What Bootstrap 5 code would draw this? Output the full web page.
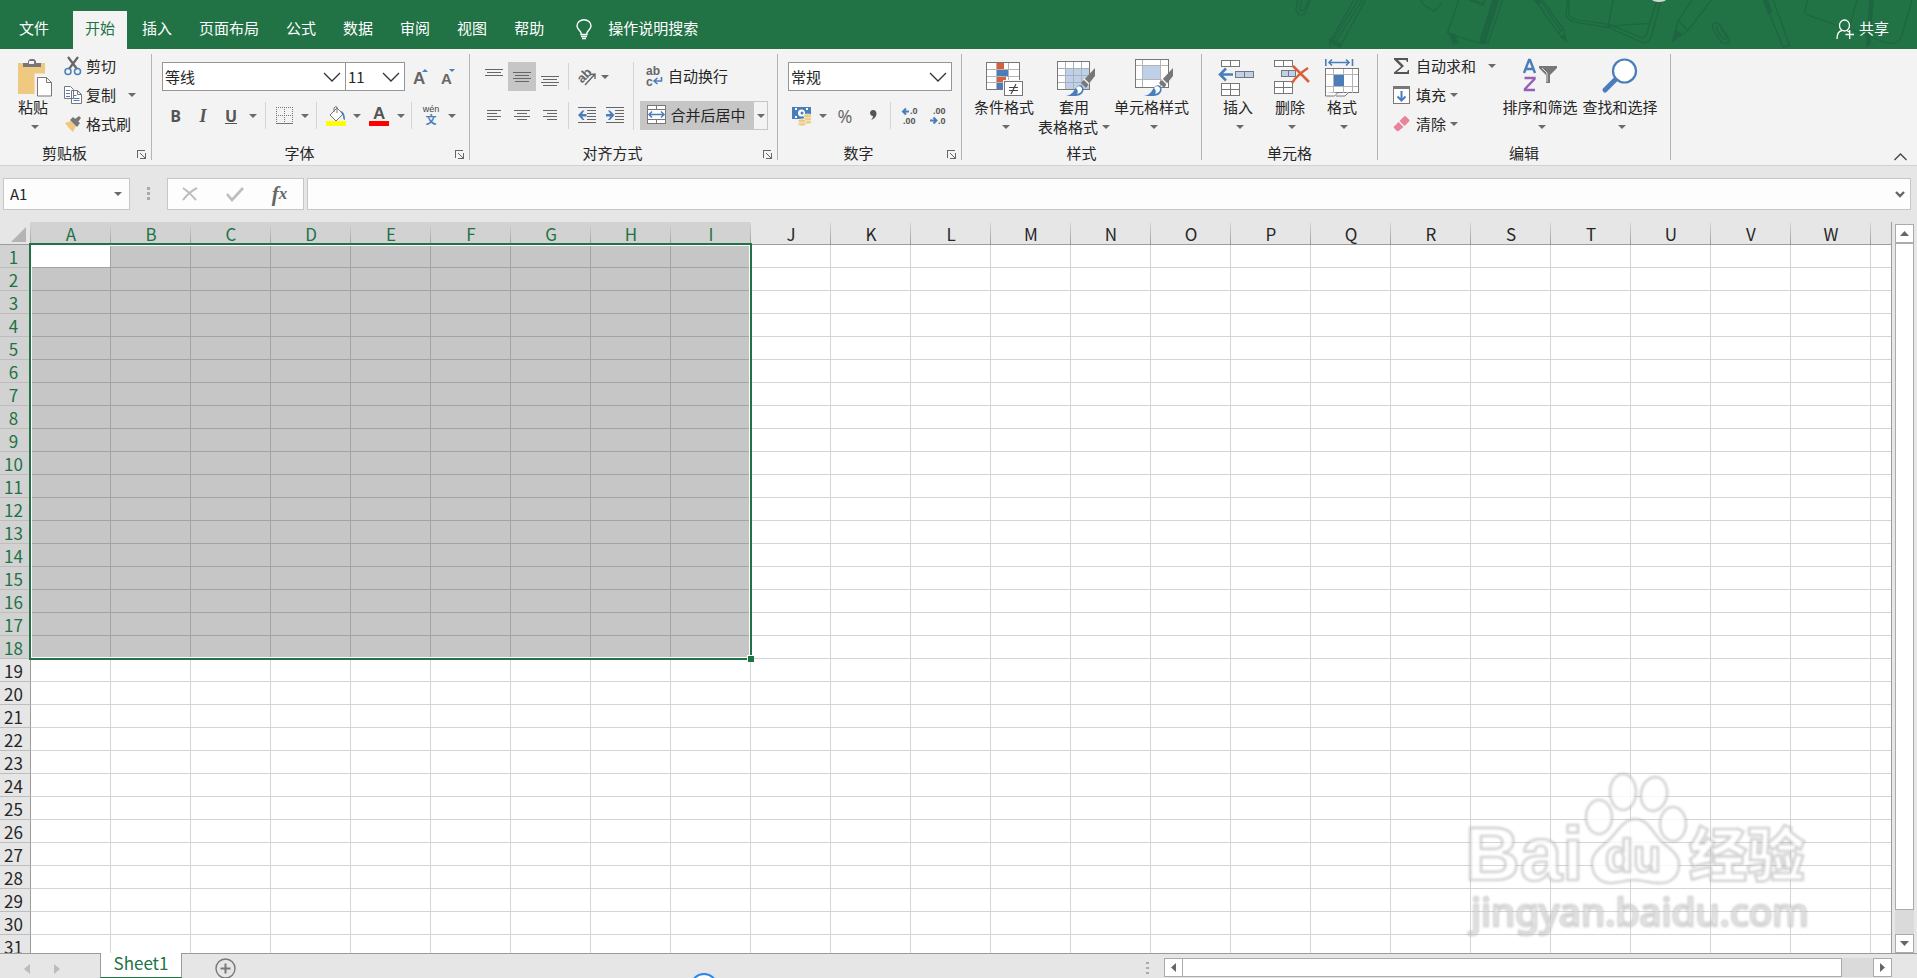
<!DOCTYPE html>
<html lang="zh-CN">
<head>
<meta charset="utf-8">
<meta name="viewport" content="width=device-width, initial-scale=1">
<title>工作簿</title>
<link rel="stylesheet" href="https://cdn.jsdelivr.net/npm/bootstrap@5.3.0/dist/css/bootstrap.min.css">
<style>
:root{--green:#217346;--line:#c6c6c6;--edge:#9b9b9b;--chrome:#e6e6e6;--ribbon:#f3f3f3}
body{font-family:"Noto Sans CJK SC",sans-serif;font-size:15px;line-height:20px;color:#262626;background:var(--chrome)}
button,select,input{font:inherit;color:inherit}
svg{display:block;flex:none;overflow:visible}
.crisp{shape-rendering:crispEdges}
/* title strip */
.tabstrip{background:var(--green);height:49px;color:#fff;padding-top:11px}
.tabstrip .art{position:absolute;right:0;top:0;overflow:hidden}
.rtab{border:0;background:none;color:#fff;padding:0 12px 4px;height:38px;line-height:34px}
.rtab.first{padding-left:19px;padding-right:21px}
.rtab.active{background:var(--ribbon);color:var(--green)}
/* ribbon */
.ribbon{background:var(--ribbon);border-bottom:1px solid #d2d2d2;height:117px;padding:5px 0}
.grp{border-right:1px solid #b5b5b5;height:106px;flex:none}
.grp-body{height:89px}
.grp-name{height:17px;line-height:19px;text-align:center}
.launch{width:22px;padding:0 5px 0 0;border:0;background:none;display:flex;justify-content:flex-end;align-items:flex-end;height:17px}
.launch svg{margin-bottom:1px}
.rb{border:0;background:none;padding:0;height:29px;display:flex;align-items:center;justify-content:center;flex:none;white-space:nowrap}
.rb.on{background:#c6c6c6}
.rb.cap{padding-bottom:2px}
.row26{height:26px;justify-content:flex-start;gap:4px;padding-bottom:2px}
.big{border:0;background:none;padding:0;display:flex;flex-direction:column;align-items:center;flex:none;white-space:nowrap}
.big .pic{height:43px;display:flex;align-items:flex-end}
.big .lbl{height:20px;line-height:20px}
.big .sub{height:20px;line-height:20px;display:flex;align-items:center;gap:3px}
.big .sub .caret{margin-left:4px}
.vr1{width:1px;height:27px;background:#d4d4d4;margin:0 4px;flex:none}
.caret{width:8px;height:4px;border:4px solid transparent;border-top-color:#6a6a6a;border-bottom:0;flex:none}
.w12{width:12px}.w14{width:14px}.w16{width:16px}.w26{width:26px}.w27{width:27px}.w28{width:28px}.w30{width:30px}.w32{width:32px}
.pick{appearance:none;border:1px solid #969696;border-radius:0;height:29px;padding:0 0 0 2px;line-height:24px;background:#fff url("data:image/svg+xml,%3Csvg xmlns='http://www.w3.org/2000/svg' width='18' height='10'%3E%3Cpath d='M1 1l8 8 8-8' fill='none' stroke='%23333' stroke-width='1.3'/%3E%3C/svg%3E") no-repeat right 4px center}
.pct{font:400 18px/18px "Open Sans",sans-serif;color:#666}
.gl{font:700 16px/20px "Open Sans",sans-serif;color:#555}
/* formula bar */
.fbar{padding:12px 6px 12px 3px;height:56px}
.fbox{background:#fdfdfd;border:1px solid var(--line);height:32px}
.fbox input{border:0;background:none;outline:0;min-width:0}
/* sheet */
.gridwrap{background:#fff;border-right:1px solid var(--edge);overflow:hidden;min-width:0;position:relative}
.cells{border-collapse:separate;border-spacing:0;table-layout:fixed;width:1951px;font-size:17px}
.cells th,.cells td{padding:0;height:23px;font-weight:400;text-align:center;line-height:20px;overflow:hidden;color:#262626}
.cells td{border-right:1px solid #d4d4d4;border-bottom:1px solid #d4d4d4;width:80px}
.cells thead th{background:var(--chrome);border-bottom:1px solid var(--edge);border-right:1px solid;border-image:linear-gradient(#dcdcdc,#9b9b9b) 1;padding-top:2px;padding-left:1px}
.cells tbody th{background:var(--chrome);border-right:1px solid var(--edge);border-bottom:1px solid #bdbdbd;padding-top:2px;width:31px;padding-right:3px}
.cells thead th.sel,.cells tbody th.sel{background:#d2d2d2;color:var(--green)}
.cells td.sel{background:#c6c6c6;border-color:#a3a3a3}
.cells td.cur{background:#fff}
.range{position:absolute;left:29px;top:21px;width:723px;height:417px;border:2px solid var(--green);box-shadow:inset 0 0 0 1px #fff;pointer-events:none}
.range i{position:absolute;right:-4px;bottom:-4px;width:7px;height:7px;background:var(--green);border:1px solid #fff;border-right:0;border-bottom:0}
.wm{position:absolute;right:76px;bottom:12px;pointer-events:none}
.vbar{width:25px;padding:2px 3px 0 3px}
.sbtn{width:19px;height:19px;border:1px solid #ababab;background:#fff;padding:0;display:flex;align-items:center;justify-content:center;flex:none}
.thumb{background:#fff;border:1px solid #ababab}
.track{background:#dadada}
.foot{height:25px;border-top:1px solid var(--edge)}
.stab{background:#fff;border:1px solid var(--edge);border-top:0;border-bottom:1px solid var(--green);color:var(--green);font-size:17px;line-height:20px;height:25px;margin-top:-1px;width:82px;padding:0 0 4px}
.hbar{width:38%;height:19px;margin-right:25px}
.bubble{position:absolute;left:50%;bottom:0;margin-left:-268px}
</style>
</head>
<body>
<div class="vh-100 d-flex flex-column overflow-hidden position-relative">

<header class="tabstrip d-flex position-relative flex-shrink-0">
  <svg class="art" width="637" height="49" viewBox="0 0 1568 147" preserveAspectRatio="none" fill="none" stroke="#1e6641" stroke-width="3.500" aria-hidden="true">
    <path d="M44 0l-5 28q6 24 22 14l14-42M54 0l-5 28q6 8 12 0l8-28M182 0l-60 128 2 14M210 0l-62 140-24-18M192 0l-62 122M202 0l-64 124M348 0q0 14 16 22l14 12 20-24M440 0l-28 98 20 10 68 24 12-4L548 0M466 0l34 16 4-16M474 0l28 10"/>
    <path d="M524 0l-32 124 12 6L538 0zM416 100l12 32 2-8 8 6-8-26zM122 118l28 14-2 10-20-12z" fill="#1e6641"/>
    <path d="M628 0l56 98 20 24-6-34L646 0M684 98l14-10M640 0l52 92M708 0l-4 46q6 18 28 22l76 14 86 46q16-2 20-18L938 0M712 0l-2 40q4 18 26 20l76 14 80 40q8-2 12-18L928 0M820 0l-12 78 104-8M1014 0l-34 62-12 60 36-30L1062 0M980 62l24 30M1066 72q-6 12 20 54 18 10 22-6l-24-44q-14-14-18-4M1076 78q-4 14 16 38 10 4 6-10l-14-22M1192 0l46 142 16-6L1214 0M1298 0l-6 36q10 16 40 22l60 28 14 20M1300 44l60 28M1420 0l-20 92M1556 0l-28 116q-12 20-36 12l-92-42"/>
    <path d="M1452 0l-8 140 8-8 2-40 6-92zM966 122l8-32 14 14zM1190 0l12 40 8-4-10-36zM692 112l8-6 4 16zM626 0l10 12 4-4-6-8z" fill="#1e6641"/>
    <ellipse cx="933" cy="-2" rx="17" ry="8" fill="#d4d4d4" stroke="none"/>
  </svg>
  <nav class="d-flex" style="gap:3px">
    <button class="rtab first">文件</button><button class="rtab active">开始</button><button class="rtab">插入</button><button class="rtab">页面布局</button><button class="rtab">公式</button><button class="rtab">数据</button><button class="rtab">审阅</button><button class="rtab">视图</button><button class="rtab">帮助</button>
  </nav>
  <button class="rtab d-flex ms-2">
    <svg class="mt-2 me-3" width="16" height="21" viewBox="0 0 16 21" fill="none" stroke="#fff" stroke-width="1.4"><path d="M5 15.500v-2C4 11.500 1 10 1 7a7 6.300 0 0 1 14 0c0 3-3 4.500-4 6.500v2zM5 17.500h6M6 19.500h4"/></svg>
    <span>操作说明搜索</span></button>
  <button class="rtab d-flex ms-auto position-relative me-3">
    <svg class="mt-2 me-1" width="19" height="20" viewBox="0 0 19 20" fill="none" stroke="#fff" stroke-width="1.300"><ellipse cx="8.500" cy="6.500" rx="5" ry="5.500"/><path d="M1 20c0-5 2-8 5-8.500M11 11.500l2 1.500M9.500 15.500H18M13.700 11v9"/></svg>
    <span>共享</span></button>
</header>

<section class="ribbon d-flex position-relative flex-shrink-0">
  <!-- clipboard -->
  <div class="grp" style="width:152px">
    <div class="grp-body d-flex">
      <button class="big ms-2" style="width:50px"><span class="pic"><svg class="ms-1" width="36" height="38" viewBox="0 0 36 38"><path d="M1 4h27v31H1z" fill="#eec97f"/><path d="M6 8V4h5V2l2-2h4l2 2v2h5v4z" fill="#777"/><path d="M12 2h5v3h-5z" fill="#f3f3f3"/><path d="M19 16h11l5 5v16H19z" fill="#fff" stroke="#f3f3f3" stroke-width="3"/><path d="M20.500 18.500h9l5 5v13.500h-14zM29.500 18.500v5h5" fill="#fff" stroke="#777"/></svg></span><span class="lbl">粘贴</span><span class="sub"><span class="caret"></span></span></button>
      <div class="d-flex flex-column" style="gap:3px;margin-left:6px">
        <button class="rb row26"><svg width="18" height="20" viewBox="0 0 18 20" fill="none"><path d="M4 1l9 12M14 1L5 13" stroke="#666" stroke-width="2.200"/><circle cx="4" cy="15.500" r="3" stroke="#4a7ebb" stroke-width="1.500"/><circle cx="13.500" cy="15.500" r="3" stroke="#4a7ebb" stroke-width="1.500"/></svg>剪切</button>
        <button class="rb row26"><svg width="18" height="20" viewBox="0 0 18 20" fill="#fff" stroke="#777"><path d="M.5 1.500h6l3 3v9h-9zM7.500 5.500h6l4 4v9h-10zM13.500 5.500v4h4"/><path d="M2 5.500h4M2 8.500h4M2 11.500h4M9.500 10.500h3M9.500 13.500h6M9.500 15.500h6" stroke="#4a7ebb"/></svg>复制<span class="caret" style="margin-left:8px"></span></button>
        <button class="rb row26"><svg width="18" height="18" viewBox="0 0 18 18"><path d="M1 8l6-2 5 5-3 6q-5-4-8-9z" fill="#eec97f"/><path d="M6 5l3-3 7 6-3 4zM11 4l4-3 2 2-3 4z" fill="#777"/></svg>格式刷</button>
      </div>
    </div>
    <div class="d-flex"><div class="grp-name flex-fill">剪贴板</div><button class="launch" aria-label="剪贴板设置"><svg width="9" height="9"><use href="#ln"/></svg></button></div>
  </div>

  <!-- font -->
  <div class="grp" style="width:318px">
    <div class="grp-body" style="padding:8px 0 0 10px">
      <div class="d-flex align-items-center">
        <select class="pick" style="width:184px" aria-label="字体"><option>等线</option></select><select class="pick" style="width:60px;margin-left:-1px" aria-label="字号"><option>11</option></select>
        <button class="rb w28" aria-label="增大字号"><svg width="18" height="20" viewBox="0 0 18 20"><text x="3" y="17" font-family="Liberation Sans" font-weight="700" font-size="17" fill="#666">A</text><path d="M12 5l3-3 3 3z" fill="#4a7ebb"/></svg></button>
        <button class="rb w27" aria-label="减小字号"><svg width="18" height="20" viewBox="0 0 18 20"><text x="3" y="17" font-family="Liberation Sans" font-weight="700" font-size="15" fill="#666">A</text><path d="M11 2h6l-3 3z" fill="#4a7ebb"/></svg></button>
      </div>
      <div class="d-flex align-items-center" style="margin-top:10px">
        <button class="rb w27 gl">B</button><button class="rb w28 gl" style="font-family:'Liberation Serif',serif;font-style:italic;font-size:18px">I</button><button class="rb w28 gl text-decoration-underline">U</button><button class="rb w16" aria-label="下划线"><span class="caret"></span></button><span class="vr1"></span>
        <button class="rb w28" aria-label="边框"><svg class="crisp" width="17" height="17" viewBox="0 0 17 17" fill="none" stroke="#777"><path d="M0 .5h17M.5 0v16M8.500 0v16M16.500 0v16M0 8.500h17" stroke-dasharray="1 1"/><path d="M0 16.500h17"/></svg></button><button class="rb w14" aria-label="边框选项"><span class="caret"></span></button><span class="vr1"></span>
        <button class="rb w30" aria-label="填充颜色"><svg width="20" height="20" viewBox="0 0 20 20"><path d="M4 9l7-7 6 6-7 7z" fill="#fff" stroke="#777"/><path d="M8 6V2q1-2 3-1v6" fill="none" stroke="#777"/><path d="M14 5q5 0 5 9-2 0-2-4z" fill="#4a7ebb"/><path d="M0 15h20v5H0z" fill="#ff0"/></svg></button><button class="rb w12" aria-label="填充颜色选项"><span class="caret"></span></button>
        <button class="rb w32" aria-label="字体颜色"><svg width="20" height="20" viewBox="0 0 20 20"><text x="4" y="13" font-family="Liberation Sans" font-weight="700" font-size="17" fill="#555">A</text><path d="M0 15h20v5H0z" fill="red"/></svg></button><button class="rb w12" aria-label="字体颜色选项"><span class="caret"></span></button><span class="vr1"></span>
        <button class="rb w30" aria-label="拼音"><svg width="18" height="20" viewBox="0 0 18 20"><text x="9" y="6" text-anchor="middle" font-family="Liberation Sans" font-size="9" fill="#444">wén</text><text x="9" y="18" text-anchor="middle" font-family="Noto Sans CJK SC" font-size="11" font-weight="700" fill="#4a7ebb">文</text></svg></button><button class="rb w12" aria-label="拼音选项"><span class="caret"></span></button>
      </div>
    </div>
    <div class="d-flex"><div class="grp-name flex-fill">字体</div><button class="launch" aria-label="字体设置"><svg width="9" height="9"><use href="#ln"/></svg></button></div>
  </div>

  <!-- alignment -->
  <div class="grp" style="width:308px">
    <div class="grp-body d-flex" style="padding:8px 0 0 10px">
      <div>
        <div class="d-flex align-items-center">
          <button class="rb w28" aria-label="顶端对齐"><svg class="crisp" width="18" height="20" stroke="#666"><path d="M0 2.500h18M2 5.500h14M0 8.500h18"/></svg></button><button class="rb w28 on" aria-label="垂直居中"><svg class="crisp" width="18" height="12" stroke="#666"><path d="M0 1.500h18M2 4.500h14M0 7.500h18M2 10.500h14"/></svg></button><button class="rb w28" aria-label="底端对齐"><svg class="crisp" width="18" height="20" stroke="#666"><path d="M0 9.500h18M2 12.500h14M0 15.500h18M2 18.500h14"/></svg></button><span class="vr1"></span>
          <button class="rb w28" aria-label="方向"><svg width="20" height="18" viewBox="0 0 20 18"><text x="3" y="15" transform="rotate(-45 5 13)" font-family="Liberation Sans" font-weight="700" font-size="13" fill="#666">ab</text><path d="M8 17L18 6M13.500 6.500L18 6v5" fill="none" stroke="#666" stroke-width="1.400"/></svg></button><span class="caret"></span>
        </div>
        <div class="d-flex align-items-center" style="margin-top:10px">
          <button class="rb w28" aria-label="左对齐"><svg class="crisp" width="14" height="12" stroke="#666"><path d="M0 .5h14M0 3.500h10M0 6.500h14M0 9.500h10"/></svg></button><button class="rb w28" aria-label="居中"><svg class="crisp" width="16" height="12" stroke="#666"><path d="M0 .5h16M3 3.500h10M0 6.500h16M3 9.500h10"/></svg></button><button class="rb w28" aria-label="右对齐"><svg class="crisp" width="14" height="12" stroke="#666"><path d="M0 .5h14M4 3.500h10M0 6.500h14M4 9.500h10"/></svg></button><span class="vr1"></span>
          <button class="rb w28" aria-label="减少缩进"><svg width="18" height="17" viewBox="0 0 18 17"><path class="crisp" d="M0 .5h18M9 3.500h9M9 6.500h9M9 9.500h9M9 12.500h9M0 15.500h18" stroke="#666"/><path d="M0 8l4.500-4.500h2L4 7h4.500v2.500H4L6.500 13h-2z" fill="#4a7ebb"/></svg></button><button class="rb w28" aria-label="增加缩进"><svg width="18" height="17" viewBox="0 0 18 17"><path class="crisp" d="M0 .5h18M9 3.500h9M9 6.500h9M9 9.500h9M9 12.500h9M0 15.500h18" stroke="#666"/><path d="M8.500 8L4 3.500H2L4.500 7H0v2.500h4.500L2 13h2z" fill="#4a7ebb"/></svg></button>
        </div>
      </div>
      <span class="vr1" style="height:68px"></span>
      <div style="margin-left:2px">
        <button class="rb cap justify-content-start"><svg class="mx-1" width="20" height="22" viewBox="0 0 20 22"><text x="2" y="10" font-family="Liberation Sans" font-weight="700" font-size="12" fill="#666">ab</text><text x="2" y="21" font-family="Liberation Sans" font-weight="700" font-size="12" fill="#666">c</text><path d="M17.500 12v4H11M13.500 13l-3.500 3 3.500 3" fill="none" stroke="#4a7ebb" stroke-width="1.600"/></svg>自动换行</button>
        <div class="d-flex" style="margin-top:10px">
          <button class="rb cap on" style="width:113px"><svg class="me-1 crisp" width="19" height="19" viewBox="0 0 19 19"><path d="M.5.500h18v18H.5zM.5 4.500h18M.5 14.500h18M9.500 0v4M9.500 15v4" fill="#fff" stroke="#777"/><path d="M2.500 9.500h14M5 6.500l-3 3 3 3M14 6.500l3 3-3 3" fill="none" stroke="#4a7ebb" stroke-width="1.500" shape-rendering="auto"/></svg>合并后居中</button><button class="rb" style="width:15px;border:1px solid #c6c6c6" aria-label="合并选项"><span class="caret"></span></button>
        </div>
      </div>
    </div>
    <div class="d-flex"><div class="grp-name flex-fill">对齐方式</div><button class="launch" aria-label="对齐设置"><svg width="9" height="9"><use href="#ln"/></svg></button></div>
  </div>

  <!-- number -->
  <div class="grp" style="width:184px">
    <div class="grp-body" style="padding:8px 0 0 10px">
      <select class="pick d-block" style="width:164px" aria-label="数字格式"><option>常规</option></select>
      <div class="d-flex align-items-center" style="margin-top:10px">
        <button class="rb w28" aria-label="会计格式"><svg width="20" height="20" viewBox="0 0 20 20"><path d="M0 1h19v12H0z" fill="#4a7ebb"/><path d="M3 3h2M14 3h2M3 11h2" stroke="#fff" stroke-width="2"/><circle cx="9.500" cy="7" r="3.500" fill="#fff"/><circle cx="10" cy="7" r="1.500" fill="#4a7ebb"/><g fill="#eec97f" stroke="#f3f3f3" stroke-width=".8"><ellipse cx="15.500" cy="16" rx="4" ry="2"/><ellipse cx="15.500" cy="13" rx="4" ry="2"/><ellipse cx="15.500" cy="10" rx="4" ry="2"/><ellipse cx="10" cy="18" rx="4" ry="2"/><ellipse cx="10" cy="15" rx="4" ry="2"/></g></svg></button><button class="rb w14" aria-label="会计格式选项"><span class="caret"></span></button>
        <button class="rb w30 pct">%</button><button class="rb w26" aria-label="千位分隔"><svg width="7" height="12" viewBox="0 0 7 12"><path d="M3 0c5 0 5 8-2 10 1.500-1.500 2-2.500 2-4C-1 6-1 0 3 0" fill="#555"/></svg></button><span class="vr1"></span>
        <button class="rb w30" aria-label="增加小数位"><svg width="18" height="20" viewBox="0 0 18 20" font-family="Liberation Sans" font-weight="700" font-size="9" fill="#555"><text x="9" y="8">.0</text><text x="2" y="18">.00</text><path d="M8 5.500H2M5 2.500l-3 3 3 3" fill="none" stroke="#4a7ebb" stroke-width="2"/></svg></button><button class="rb w28" aria-label="减少小数位"><svg width="18" height="20" viewBox="0 0 18 20" font-family="Liberation Sans" font-weight="700" font-size="9" fill="#555"><text x="3" y="8">.00</text><text x="8" y="18">.0</text><path d="M0 14.500h6M3.500 11.500l3 3-3 3" fill="none" stroke="#4a7ebb" stroke-width="2"/></svg></button>
      </div>
    </div>
    <div class="d-flex"><div class="grp-name flex-fill">数字</div><button class="launch" aria-label="数字设置"><svg width="9" height="9"><use href="#ln"/></svg></button></div>
  </div>

  <!-- styles -->
  <div class="grp" style="width:240px">
    <div class="grp-body d-flex" style="padding-left:9px">
      <button class="big" style="width:66px"><span class="pic"><svg width="38" height="36" viewBox="0 0 38 36"><path class="crisp" d="M1.500 1.500h33v27h-33z" fill="#fff"/><path d="M12 2h7v6h-7zM12 15h9v6h-9z" fill="#d9603b"/><path d="M12 9h11v6H12zM12 22h6v6h-6z" fill="#4a7ebb"/><path class="crisp" d="M11.500 2v27M23.500 2v27M2 8.500h33M2 15.500h33M2 21.500h33" fill="none" stroke="#b4b4b4"/><path class="crisp" d="M1.500 1.500h33v27h-33z" fill="none" stroke="#777"/><path class="crisp" d="M18 19h20v16H18z" fill="#f3f3f3"/><path class="crisp" d="M19.500 20.500h18v14h-18z" fill="#fff" stroke="#777"/><path d="M24 26.500h9M24 29.500h9M31 23l-5 10" stroke="#444" stroke-width="1.200"/></svg></span><span class="lbl">条件格式</span><span class="sub"><span class="caret"></span></span></button>
      <button class="big" style="width:74px"><span class="pic"><svg class="ms-1" width="38" height="36" viewBox="0 0 38 36"><path d="M.5.500h32v29H.5z" fill="#fff"/><path d="M9 8h23v21H9z" fill="#bfd1e8"/><path class="crisp" d="M8.500 0v29M16.500 0v29M24.500 0v29M0 7.500h32M0 14.500h32M0 21.500h32" stroke="#a8b0ba"/><path class="crisp" d="M.5.500h32v28H.5z" fill="none" stroke="#777"/><use href="#brush"/></svg></span><span class="lbl">套用</span><span class="sub" style="gap:0">表格格式<span class="caret"></span></span></button>
      <button class="big" style="width:81px"><span class="pic"><svg class="ms-1" width="38" height="39" viewBox="0 0 38 39"><path d="M.5 1.500h33v28H.5z" fill="#fff"/><path d="M8 8h17v13H8z" fill="#bfd1e8"/><path class="crisp" d="M7.500 1v28M25.500 1v28M0 7.500h33M0 21.500h33" stroke="#b4b4b4"/><path class="crisp" d="M.5 1.500h33v28H.5z" fill="none" stroke="#777"/><g transform="translate(0 3)"><use href="#brush"/></g></svg></span><span class="lbl">单元格样式</span><span class="sub"><span class="caret"></span></span></button>
    </div>
    <div class="grp-name">样式</div>
  </div>

  <!-- cells -->
  <div class="grp" style="width:176px">
    <div class="grp-body d-flex" style="padding-left:10px">
      <button class="big" style="width:52px"><span class="pic"><svg class="me-1" width="36" height="38" viewBox="0 0 36 38" fill="#fff" stroke="#777"><path class="crisp" d="M3.500 1.500h18v6h-18zM12.500 1.500v6M3.500 24.500h18v12h-18zM12.500 24v12M3.500 30.500h18"/><path class="crisp" d="M17.500 12.500h18v6h-18zM26.500 12.500v6" fill="#bfd1e8"/><path d="M2 15.500h13M8 9.500l-6 6 6 6" fill="none" stroke="#4a7ebb" stroke-width="2.500"/></svg></span><span class="lbl">插入</span><span class="sub"><span class="caret"></span></span></button>
      <button class="big" style="width:52px"><span class="pic"><svg class="ms-1" width="36" height="38" viewBox="0 0 36 38" fill="#fff" stroke="#777"><path class="crisp" d="M.5 1.500h18v6H.5zM9.500 1.500v6M.5 22.500h18v12H.5zM9.500 22v12M.5 28.500h18"/><path class="crisp" d="M7.500 11.500h14v6h-14zM14.500 11.500v6" fill="#bfd1e8"/><path d="M19 7l16 16M34 9Q23 16 18 24" fill="none" stroke="#d9603b" stroke-width="2.500"/></svg></span><span class="lbl">删除</span><span class="sub"><span class="caret"></span></span></button>
      <button class="big" style="width:52px"><span class="pic"><svg width="34" height="39" viewBox="0 0 34 39" fill="#fff" stroke="#777"><path class="crisp" d="M.5 10.500h33v24H.5z"/><path class="crisp" d="M8.500 11v24M18.500 11v24M27.500 11v24M1 16.500h32M1 28.500h32" stroke="#b4b4b4"/><path d="M9 17h10v11H9z" fill="#4a7ebb" stroke="none"/><path d="M.5 34v4h9l3-3M11 38h9l4-4"/><path d="M.8 1v7M27.500 1v7M4 4.500h20M7 1.500l-3 3 3 3M21 1.500l3 3-3 3" fill="none" stroke="#4a7ebb" stroke-width="1.600"/></svg></span><span class="lbl">格式</span><span class="sub"><span class="caret"></span></span></button>
    </div>
    <div class="grp-name">单元格</div>
  </div>

  <!-- editing -->
  <div class="grp" style="width:293px">
    <div class="grp-body d-flex" style="padding-left:14px">
      <div class="d-flex flex-column" style="gap:3px;width:108px">
        <button class="rb row26"><svg width="20" height="18" viewBox="0 0 20 18"><path d="M2 1h14v4h-1l-1-2H6l6 6-7 6h10l1-2h1v4H2v-1.500L9 9.500 2 2.500z" fill="#555"/></svg>自动求和<span class="caret" style="margin-left:8px"></span></button>
        <button class="rb row26"><svg width="20" height="18" viewBox="0 0 20 18"><path class="crisp" d="M1.500.5h16v17h-16z" fill="#fff" stroke="#777"/><path d="M1 0h17v3H1z" fill="#777"/><path d="M9.500 5v9M5.500 10.500l4 4 4-4" fill="none" stroke="#4a7ebb" stroke-width="2"/></svg>填充<span class="caret"></span></button>
        <button class="rb row26"><svg width="20" height="18" viewBox="0 0 20 18"><path d="M7.500 6L12 1.500q1-1 2 0l3 3q1 1 0 2L12.500 11zM6.500 7L2 11.500q-.8.800 0 1.600l3 3q.8.800 1.600 0L11.500 12z" fill="#e8849a"/></svg>清除<span class="caret"></span></button>
      </div>
      <button class="big" style="width:80px"><span class="pic"><svg class="mb-1" width="36" height="34" viewBox="0 0 36 34"><g fill="none" stroke-width="2.400"><path d="M2 14L7 1h1l5 13M4 10h7" stroke="#4a7ebb"/><path d="M2.500 19h10v1L3 30v1h10" stroke="#9460b8"/></g><path d="M17 7h18v2l-7 7v8h-4v-8l-7-7z" fill="#777"/><path d="M20 9l5 5v9" stroke="#ddd" fill="none"/></svg></span><span class="lbl">排序和筛选</span><span class="sub"><span class="caret"></span></span></button>
      <button class="big" style="width:80px"><span class="pic"><svg class="mb-1" width="36" height="35" viewBox="0 0 36 35"><path d="M3 32l12-12" stroke="#4a7ebb" stroke-width="5" stroke-linecap="round"/><circle cx="22.500" cy="13" r="11.500" fill="#fff" stroke="#4a7ebb" stroke-width="2.200"/></svg></span><span class="lbl">查找和选择</span><span class="sub"><span class="caret"></span></span></button>
    </div>
    <div class="grp-name">编辑</div>
  </div>
  <button class="rb ms-auto align-self-end" style="width:12px;height:6px;margin-right:11px" aria-label="折叠功能区"><svg width="13" height="8" viewBox="0 0 13 8"><path d="M.5 7l6-6 6 6" fill="none" stroke="#444" stroke-width="1.300"/></svg></button>
</section>

<section class="fbar d-flex flex-shrink-0">
  <div class="fbox d-flex align-items-center" style="width:127px"><input class="flex-fill w-75" style="padding-left:6px" value="A1" aria-label="名称框"><button class="rb" style="width:22px" aria-label="名称列表"><span class="caret"></span></button></div>
  <svg class="mx-3 align-self-center" width="5" height="14" fill="#aaa"><path d="M1 0h3v3H1zM1 5h3v3H1zM1 10h3v3H1z"/></svg>
  <div class="fbox d-flex align-items-center" style="width:137px">
    <button class="rb" style="width:44px" aria-label="取消"><svg width="16" height="14" viewBox="0 0 16 14"><path d="M1 1q6 4 13 12M15 1Q7 5 1 13" fill="none" stroke="#bdbdbd" stroke-width="2"/></svg></button>
    <button class="rb" style="width:45px" aria-label="输入"><svg width="18" height="14" viewBox="0 0 18 14"><path d="M1 7l5 6L17 1" fill="none" stroke="#bdbdbd" stroke-width="2.600"/></svg></button>
    <button class="rb" style="width:45px;font:italic 700 21px/24px 'Liberation Serif',serif;color:#666" aria-label="插入函数">f<span style="font-size:17px">x</span></button>
  </div>
  <div class="fbox d-flex align-items-center flex-fill" style="margin-left:3px"><input class="flex-fill" aria-label="编辑栏"><button class="rb" style="width:20px" aria-label="展开编辑栏"><svg width="10" height="7" viewBox="0 0 10 7"><path d="M1 1l4 4 4-4" fill="none" stroke="#666" stroke-width="2.400"/></svg></button></div>
</section>

<main class="d-flex flex-fill overflow-hidden" style="min-height:0">
  <div class="gridwrap flex-fill">
    <table class="cells"><thead><tr id="cols"><th style="width:31px"><svg class="ms-auto me-1" width="15" height="15"><path d="M15 0v15H0z" fill="#b4b4b4"/></svg></th></tr></thead><tbody id="rows"></tbody></table>
    <div class="range"><i></i></div>
    <svg class="wm" width="352" height="170" viewBox="1465 770 352 170" fill="#fff" fill-opacity=".8" stroke="#808080" stroke-opacity=".34" stroke-width="2.600" stroke-linejoin="round" style="filter:blur(.8px)">
      <text x="1467" y="879" font-family="Liberation Sans" font-weight="700" font-size="76">Bai</text>
      <ellipse cx="1601" cy="816" rx="13" ry="17"/><ellipse cx="1625" cy="791" rx="13" ry="18"/><ellipse cx="1656" cy="793" rx="13" ry="17" transform="rotate(10 1656 793)"/><ellipse cx="1675" cy="823" rx="13" ry="17"/>
      <path d="M1637 818c12 0 17 12 25 21 8 8 20 14 19 25 0 11-8 18-18 18-10 1-17-3-26-3s-16 3-26 3c-10-1-17-8-17-20 0-11 11-17 19-25 8-9 14-19 24-19z"/>
      <text x="1607" y="871" font-family="Liberation Sans" font-weight="700" font-size="46">du</text>
      <text x="1691" y="875" font-family="Noto Sans CJK SC" font-weight="900" font-size="58">经验</text>
      <text x="1473" y="925" font-family="Noto Sans" font-size="39">jingyan.baidu.com</text>
    </svg>
  </div>
  <div class="vbar d-flex flex-column">
    <button class="sbtn" aria-label="向上滚动"><svg width="9" height="5"><path d="M4.500 0L9 5H0z" fill="#666"/></svg></button>
    <div class="thumb flex-fill"></div><div class="track" style="height:24px"></div>
    <button class="sbtn" aria-label="向下滚动"><svg width="9" height="5"><path d="M4.500 5L9 0H0z" fill="#666"/></svg></button>
  </div>
</main>

<footer class="foot d-flex flex-shrink-0">
  <button class="rb" style="width:54px;height:25px;padding-top:4px" aria-label="上一张"><svg width="6" height="10"><path d="M6 0v10L0 5z" fill="#bcbcbc"/></svg></button>
  <button class="rb" style="width:6px;height:25px;padding-top:4px" aria-label="下一张"><svg width="6" height="10"><path d="M0 0v10l6-5z" fill="#bcbcbc"/></svg></button>
  <button class="stab" style="margin-left:40px">Sheet1</button>
  <button class="rb" style="margin-left:33px;height:25px;padding-top:4px" aria-label="新建工作表"><svg width="21" height="21" viewBox="0 0 21 21" fill="none" stroke="#777"><circle cx="10.500" cy="10.500" r="9.500" stroke-width="1.400"/><path d="M5.500 10.500h10M10.500 5.500v10" stroke-width="2"/></svg></button>
  <svg class="ms-auto mt-2" style="margin-right:14px" width="4" height="14" fill="#aaa"><path d="M0 0h3v2H0zM0 5h3v2H0zM0 10h3v2H0z"/></svg>
  <div class="hbar d-flex mt-1">
    <button class="sbtn" aria-label="向左滚动"><svg width="5" height="9"><path d="M5 0v9L0 4.500z" fill="#666"/></svg></button>
    <div class="thumb flex-fill" style="margin-left:-1px"></div><div class="track" style="width:31px"></div>
    <button class="sbtn" aria-label="向右滚动"><svg width="5" height="9"><path d="M0 0v9l5-4.500z" fill="#666"/></svg></button>
  </div>
</footer>
<svg class="bubble overflow-hidden" width="26" height="5" viewBox="0 0 26 5"><circle cx="13" cy="14" r="13" fill="#fff" stroke="#2b88e6" stroke-width="2"/></svg>
</div>

<svg width="0" height="0" class="position-absolute"><defs>
  <g id="ln" fill="none" stroke="#666" shape-rendering="crispEdges"><path d="M.5 8V.5H8M8.500 3v5.500H3"/><path d="M3 3l5 5"/></g>
  <g id="brush"><path d="M38 7v8l-8 10-5-4z" fill="#777"/><path d="M27 18l5 5" stroke="#f3f3f3" stroke-width="1.500"/><path d="M26 20l5 4-2 3-5-5z" fill="#777"/><path d="M9 35q6-1 9-7c2-4 6-5 8-2 2 4-1 9-8 9z" fill="#4a7ebb"/><path d="M19 27c2-3 6-2 6 1s-2 4-5 5q2-3-1-6" fill="#fff"/></g>
</defs></svg>
<script src="https://cdn.jsdelivr.net/npm/bootstrap@5.3.0/dist/js/bootstrap.bundle.min.js"></script>
<script>
const names = 'ABCDEFGHIJKLMNOPQRSTUVW'.split('').concat('');
const selCols = 9, selRows = 18;
document.getElementById('cols').insertAdjacentHTML('beforeend',
  names.map((n, c) => `<th${c < selCols ? ' class="sel"' : ''}>${n}</th>`).join(''));
let html = '';
for (let r = 1; r <= 31; r++) {
  html += `<tr><th${r <= selRows ? ' class="sel"' : ''}>${r}</th>`;
  html += names.map((n, c) => {
    const cls = r <= selRows && c < selCols ? (r === 1 && c === 0 ? 'sel cur' : 'sel') : '';
    return cls ? `<td class="${cls}"></td>` : '<td></td>';
  }).join('') + '</tr>';
}
document.getElementById('rows').innerHTML = html;
</script>
</body>
</html>
